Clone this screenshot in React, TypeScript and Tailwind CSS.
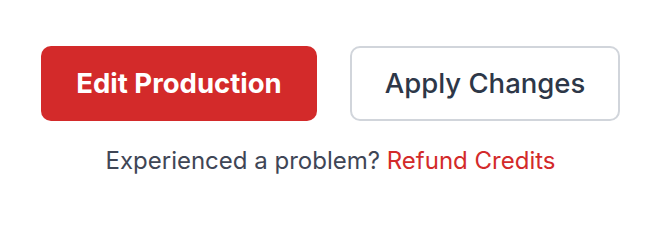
import React from 'react';

export default function App() {
  return (
    <div
      className="w-[664px] h-[210px] bg-white flex flex-col items-center pt-[46px] pr-[3px]"
      style={{ fontFamily: 'Inter, "Noto Sans", sans-serif' }}
    >
      <div className="flex gap-[33px]">
        <button className="w-[276px] h-[75px] rounded-[10px] bg-[#d32a2a] text-white text-[27.5px] font-bold">
          Edit Production
        </button>
        <button className="w-[270px] h-[75px] rounded-[10px] border-2 border-[#d1d5db] bg-white text-[#2d3748] text-[27.5px] font-medium">
          Apply Changes
        </button>
      </div>
      <p className="mt-[24px] text-[24px] leading-[32px] text-[#3f4656]">
        Experienced a problem?{' '}
        <a href="#" className="text-[#d32a2a]">
          Refund Credits
        </a>
      </p>
    </div>
  );
}
